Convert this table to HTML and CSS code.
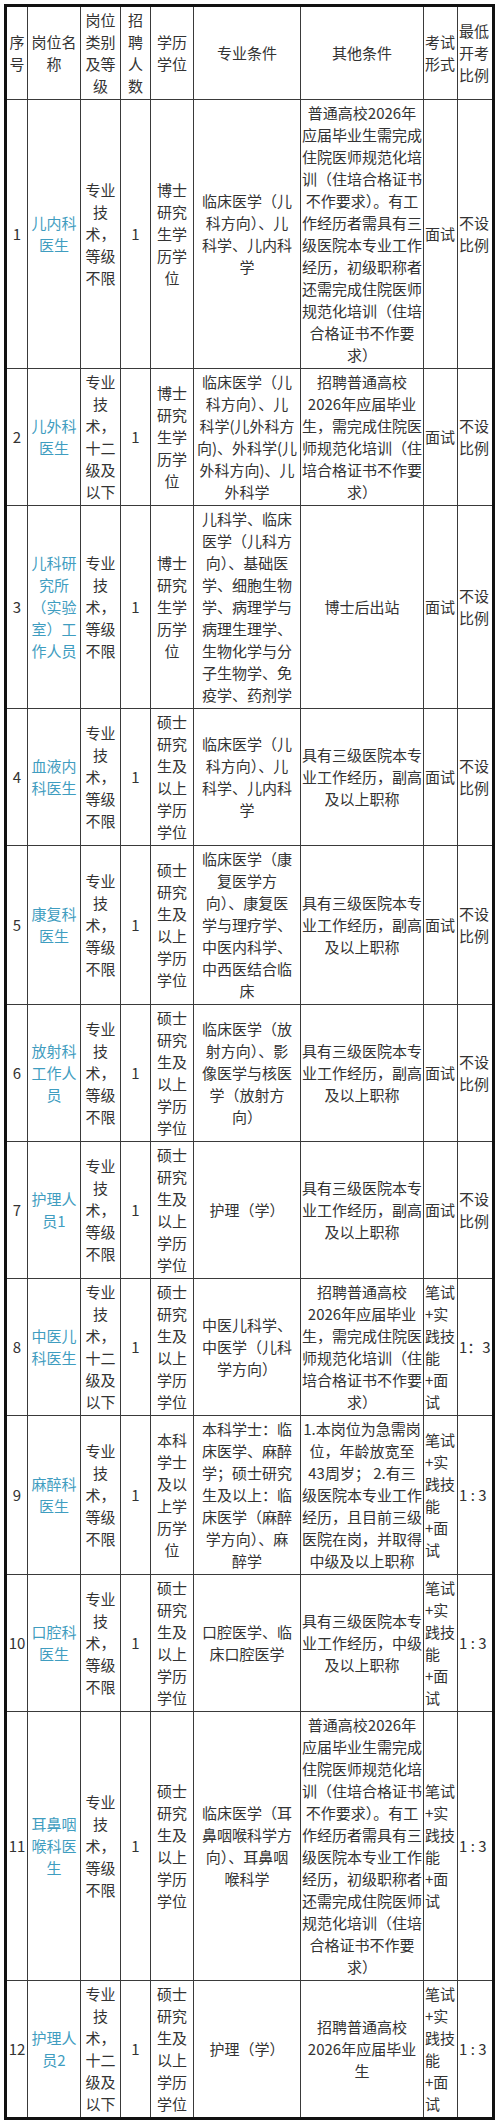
FILE: index.html
```html
<!DOCTYPE html>
<html lang="zh-CN">
<head>
<meta charset="utf-8">
<title>招聘岗位表</title>
<link rel="stylesheet" href="styles.css">
</head>
<body>
<div class="wrap">
<table class="jobs">
<colgroup>
<col class="c-no"><col class="c-name"><col class="c-type"><col class="c-num"><col class="c-edu"><col class="c-major"><col class="c-other"><col class="c-exam"><col class="c-ratio">
</colgroup>
<thead>
<tr>
<th>序<br>号</th>
<th>岗位名<br>称</th>
<th>岗位<br>类别<br>及等<br>级</th>
<th>招<br>聘<br>人<br>数</th>
<th>学历<br>学位</th>
<th>专业条件</th>
<th>其他条件</th>
<th class="exam">考试<br>形式</th>
<th class="ratio">最低<br>开考<br>比例</th>
</tr>
</thead>
<tbody>
<tr>
<td>1</td>
<td class="name">儿内科<br>医生</td>
<td>专业<br>技<br>术，<br>等级<br>不限</td>
<td>1</td>
<td>博士<br>研究<br>生学<br>历学<br>位</td>
<td>临床医学（儿<br>科方向）、儿<br>科学、儿内科<br>学</td>
<td>普通高校2026年<br>应届毕业生需完成<br>住院医师规范化培<br>训（住培合格证书<br>不作要求）。有工<br>作经历者需具有三<br>级医院本专业工作<br>经历，初级职称者<br>还需完成住院医师<br>规范化培训（住培<br>合格证书不作要<br>求）</td>
<td class="exam">面试</td>
<td class="ratio">不设<br>比例</td>
</tr>
<tr>
<td>2</td>
<td class="name">儿外科<br>医生</td>
<td>专业<br>技<br>术，<br>十二<br>级及<br>以下</td>
<td>1</td>
<td>博士<br>研究<br>生学<br>历学<br>位</td>
<td>临床医学（儿<br>科方向）、儿<br>科学(儿外科方<br>向)、外科学(儿<br>外科方向)、儿<br>外科学</td>
<td>招聘普通高校<br>2026年应届毕业<br>生，需完成住院医<br>师规范化培训（住<br>培合格证书不作要<br>求）</td>
<td class="exam">面试</td>
<td class="ratio">不设<br>比例</td>
</tr>
<tr>
<td>3</td>
<td class="name">儿科研<br>究所<br>（实验<br>室）工<br>作人员</td>
<td>专业<br>技<br>术，<br>等级<br>不限</td>
<td>1</td>
<td>博士<br>研究<br>生学<br>历学<br>位</td>
<td>儿科学、临床<br>医学（儿科方<br>向）、基础医<br>学、细胞生物<br>学、病理学与<br>病理生理学、<br>生物化学与分<br>子生物学、免<br>疫学、药剂学</td>
<td>博士后出站</td>
<td class="exam">面试</td>
<td class="ratio">不设<br>比例</td>
</tr>
<tr>
<td>4</td>
<td class="name">血液内<br>科医生</td>
<td>专业<br>技<br>术，<br>等级<br>不限</td>
<td>1</td>
<td>硕士<br>研究<br>生及<br>以上<br>学历<br>学位</td>
<td>临床医学（儿<br>科方向）、儿<br>科学、儿内科<br>学</td>
<td>具有三级医院本专<br>业工作经历，副高<br>及以上职称</td>
<td class="exam">面试</td>
<td class="ratio">不设<br>比例</td>
</tr>
<tr>
<td>5</td>
<td class="name">康复科<br>医生</td>
<td>专业<br>技<br>术，<br>等级<br>不限</td>
<td>1</td>
<td>硕士<br>研究<br>生及<br>以上<br>学历<br>学位</td>
<td>临床医学（康<br>复医学方<br>向）、康复医<br>学与理疗学、<br>中医内科学、<br>中西医结合临<br>床</td>
<td>具有三级医院本专<br>业工作经历，副高<br>及以上职称</td>
<td class="exam">面试</td>
<td class="ratio">不设<br>比例</td>
</tr>
<tr>
<td>6</td>
<td class="name">放射科<br>工作人<br>员</td>
<td>专业<br>技<br>术，<br>等级<br>不限</td>
<td>1</td>
<td>硕士<br>研究<br>生及<br>以上<br>学历<br>学位</td>
<td>临床医学（放<br>射方向）、影<br>像医学与核医<br>学（放射方<br>向）</td>
<td>具有三级医院本专<br>业工作经历，副高<br>及以上职称</td>
<td class="exam">面试</td>
<td class="ratio">不设<br>比例</td>
</tr>
<tr>
<td>7</td>
<td class="name">护理人<br>员1</td>
<td>专业<br>技<br>术，<br>等级<br>不限</td>
<td>1</td>
<td>硕士<br>研究<br>生及<br>以上<br>学历<br>学位</td>
<td>护理（学）</td>
<td>具有三级医院本专<br>业工作经历，副高<br>及以上职称</td>
<td class="exam">面试</td>
<td class="ratio">不设<br>比例</td>
</tr>
<tr>
<td>8</td>
<td class="name">中医儿<br>科医生</td>
<td>专业<br>技<br>术，<br>十二<br>级及<br>以下</td>
<td>1</td>
<td>硕士<br>研究<br>生及<br>以上<br>学历<br>学位</td>
<td>中医儿科学、<br>中医学（儿科<br>学方向）</td>
<td>招聘普通高校<br>2026年应届毕业<br>生，需完成住院医<br>师规范化培训（住<br>培合格证书不作要<br>求）</td>
<td class="exam">笔试<br>+实<br>践技<br>能<br>+面<br>试</td>
<td class="ratio">1：3</td>
</tr>
<tr>
<td>9</td>
<td class="name">麻醉科<br>医生</td>
<td>专业<br>技<br>术，<br>等级<br>不限</td>
<td>1</td>
<td>本科<br>学士<br>及以<br>上学<br>历学<br>位</td>
<td>本科学士：临<br>床医学、麻醉<br>学；硕士研究<br>生及以上：临<br>床医学（麻醉<br>学方向）、麻<br>醉学</td>
<td>1.本岗位为急需岗<br>位，年龄放宽至<br>43周岁； 2.有三<br>级医院本专业工作<br>经历，且目前三级<br>医院在岗，并取得<br>中级及以上职称</td>
<td class="exam">笔试<br>+实<br>践技<br>能<br>+面<br>试</td>
<td class="ratio">1 : 3</td>
</tr>
<tr>
<td>10</td>
<td class="name">口腔科<br>医生</td>
<td>专业<br>技<br>术，<br>等级<br>不限</td>
<td>1</td>
<td>硕士<br>研究<br>生及<br>以上<br>学历<br>学位</td>
<td>口腔医学、临<br>床口腔医学</td>
<td>具有三级医院本专<br>业工作经历，中级<br>及以上职称</td>
<td class="exam">笔试<br>+实<br>践技<br>能<br>+面<br>试</td>
<td class="ratio">1 : 3</td>
</tr>
<tr>
<td>11</td>
<td class="name">耳鼻咽<br>喉科医<br>生</td>
<td>专业<br>技<br>术，<br>等级<br>不限</td>
<td>1</td>
<td>硕士<br>研究<br>生及<br>以上<br>学历<br>学位</td>
<td>临床医学（耳<br>鼻咽喉科学方<br>向）、耳鼻咽<br>喉科学</td>
<td>普通高校2026年<br>应届毕业生需完成<br>住院医师规范化培<br>训（住培合格证书<br>不作要求）。有工<br>作经历者需具有三<br>级医院本专业工作<br>经历，初级职称者<br>还需完成住院医师<br>规范化培训（住培<br>合格证书不作要<br>求）</td>
<td class="exam">笔试<br>+实<br>践技<br>能<br>+面<br>试</td>
<td class="ratio">1 : 3</td>
</tr>
<tr>
<td>12</td>
<td class="name">护理人<br>员2</td>
<td>专业<br>技<br>术，<br>十二<br>级及<br>以下</td>
<td>1</td>
<td>硕士<br>研究<br>生及<br>以上<br>学历<br>学位</td>
<td>护理（学）</td>
<td>招聘普通高校<br>2026年应届毕业<br>生</td>
<td class="exam">笔试<br>+实<br>践技<br>能<br>+面<br>试</td>
<td class="ratio">1 : 3</td>
</tr>
</tbody>
</table>
</div>
</body>
</html>
```

FILE: styles.css
```css
html, body {
  margin: 0;
  padding: 0;
  background: #ffffff;
}

body {
  font-family: "Noto Sans CJK SC", "Noto Sans", sans-serif;
  color: #333333;
}

.wrap {
  padding: 4px 0 0 4px;
}

.jobs {
  border-collapse: collapse;
  table-layout: fixed;
  width: 491px;
  border: 3px solid #111111;
}

.c-no { width: 22px; }
.c-name { width: 53px; }
.c-type { width: 40px; }
.c-num { width: 30px; }
.c-edu { width: 43px; }
.c-major { width: 107px; }
.c-other { width: 123px; }
.c-exam { width: 34px; }
.c-ratio { width: 36px; }

.jobs th,
.jobs td {
  border: 1px solid #3a3a3a;
  padding: 2px 1px;
  font-size: 15px;
  line-height: 22px;
  font-weight: normal;
  text-align: center;
  vertical-align: middle;
  white-space: nowrap;
  overflow: hidden;
}

.jobs .exam,
.jobs .ratio {
  text-align: left;
  padding-left: 1px;
}

.jobs .name {
  color: #3f9dc0;
}
```
